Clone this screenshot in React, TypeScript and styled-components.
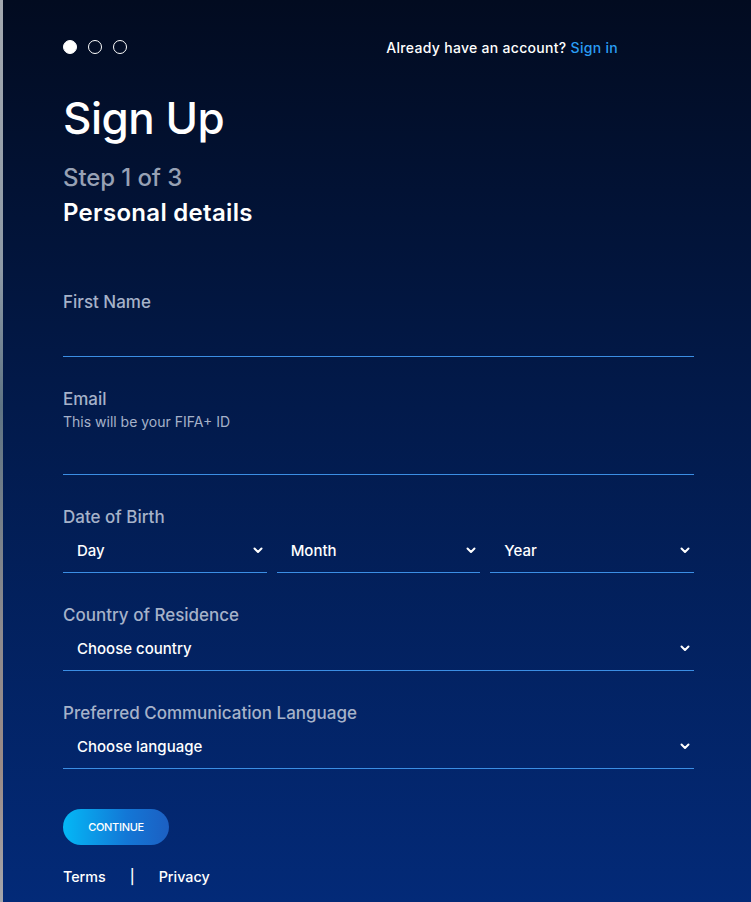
import React from "react";
import styled, { createGlobalStyle } from "styled-components";

const GlobalStyle = createGlobalStyle`
  html, body {
    margin: 0;
    padding: 0;
    background: #0a1530;
  }
  * {
    box-sizing: border-box;
  }
`;

const FONT = `"Inter", "Noto Sans", "Liberation Sans", sans-serif`;

const Page = styled.div`
  display: flex;
  min-height: 902px;
  padding-left: 3px;
  background: linear-gradient(180deg, #a4a9b0 0%, #8e9aa6 30%, #5f7484 45%, #8d8a8e 70%, #9a8a86 85%, #a4a6ad 100%);
  font-family: ${FONT};
`;

const Panel = styled.main`
  flex: 1;
  display: flex;
  flex-direction: column;
  padding: 40px 57px 16px 60px;
  background: linear-gradient(180deg, #020b20 0%, #021a4b 45%, #032a78 100%);
  color: #ffffff;
`;

const TopBar = styled.div`
  display: flex;
  align-items: center;
  justify-content: space-between;
  height: 14px;
  padding-right: 76px;
`;

const Dots = styled.div`
  display: flex;
  gap: 11px;
`;

const Dot = styled.span<{ $active?: boolean }>`
  width: 14px;
  height: 14px;
  border-radius: 50%;
  border: 1.5px solid #ffffff;
  background: ${(p) => (p.$active ? "#ffffff" : "transparent")};
`;

const SignInText = styled.p`
  margin: 0;
  font-size: 14px;
  font-weight: 500;
  letter-spacing: 0.3px;
  color: #ffffff;

  a {
    color: #2a9df4;
    text-decoration: none;
  }
`;

const Title = styled.h1`
  margin: 38px 0 0;
  font-size: 44px;
  line-height: 53px;
  font-weight: 500;
  letter-spacing: -0.5px;
`;

const StepLine = styled.div<{ $muted?: boolean; $top?: number }>`
  margin-top: ${(p) => p.$top ?? 0}px;
  font-size: 24px;
  line-height: 35px;
  font-weight: ${(p) => (p.$muted ? 500 : 600)};
  letter-spacing: ${(p) => (p.$muted ? "-0.1px" : "0.3px")};
  color: ${(p) => (p.$muted ? "#97a1b4" : "#ffffff")};
`;

const Form = styled.form`
  display: flex;
  flex-direction: column;
  gap: 30px;
  margin-top: 60px;
`;

const Field = styled.div`
  display: flex;
  flex-direction: column;
`;

const Label = styled.label`
  font-size: 17px;
  line-height: 24px;
  font-weight: 500;
  color: #a6b2c9;
`;

const Hint = styled.span`
  font-size: 14px;
  line-height: 21px;
  color: #a6b2c9;
`;

const TextInput = styled.input`
  height: 43px;
  width: 100%;
  padding: 0 14px;
  background: transparent;
  border: none;
  border-bottom: 1px solid #3b8ee4;
  color: #ffffff;
  font-family: ${FONT};
  font-size: 15px;
  outline: none;
`;

const SelectRow = styled.div`
  display: grid;
  grid-template-columns: repeat(3, 1fr);
  gap: 10px;
`;

const SelectBox = styled.div`
  display: flex;
  align-items: center;
  justify-content: space-between;
  height: 44px;
  padding: 0 4px 0 14px;
  border-bottom: 1px solid #3b8ee4;
  font-size: 15px;
  font-weight: 500;
  letter-spacing: 0;
  color: #ffffff;
`;

const Chevron = () => (
  <svg width="10" height="7" viewBox="0 0 10 7" fill="none">
    <path d="M1.5 1.5 5 5l3.5-3.5" stroke="#ffffff" strokeWidth="2" strokeLinecap="round" strokeLinejoin="round" />
  </svg>
);

const Select = ({ value }: { value: string }) => (
  <SelectBox>
    <span>{value}</span>
    <Chevron />
  </SelectBox>
);

const ContinueButton = styled.button`
  align-self: flex-start;
  margin-top: 40px;
  width: 106px;
  height: 36px;
  border: none;
  border-radius: 18px;
  background: linear-gradient(90deg, #04b8f6 0%, #1377d6 60%, #1c5fc2 100%);
  color: #ffffff;
  font-family: ${FONT};
  font-size: 11px;
  font-weight: 500;
  letter-spacing: -0.3px;
  text-transform: uppercase;
`;

const Footer = styled.nav`
  display: flex;
  align-items: center;
  gap: 24px;
  margin-top: 21px;
  font-size: 14.3px;
  font-weight: 500;
  line-height: 22px;

  a {
    color: #ffffff;
    text-decoration: none;
  }
`;

export default function App() {
  return (
    <>
      <GlobalStyle />
      <Page>
        <Panel>
          <TopBar>
            <Dots>
              <Dot $active />
              <Dot />
              <Dot />
            </Dots>
            <SignInText>
              Already have an account? <a href="#signin">Sign in</a>
            </SignInText>
          </TopBar>

          <Title>Sign Up</Title>
          <StepLine $muted $top={15}>
            Step 1 of 3
          </StepLine>
          <StepLine>Personal details</StepLine>

          <Form>
            <Field>
              <Label>First Name</Label>
              <TextInput />
            </Field>
            <Field>
              <Label>Email</Label>
              <Hint>This will be your FIFA+ ID</Hint>
              <TextInput />
            </Field>
            <Field>
              <Label>Date of Birth</Label>
              <SelectRow>
                <Select value="Day" />
                <Select value="Month" />
                <Select value="Year" />
              </SelectRow>
            </Field>
            <Field>
              <Label>Country of Residence</Label>
              <Select value="Choose country" />
            </Field>
            <Field>
              <Label>Preferred Communication Language</Label>
              <Select value="Choose language" />
            </Field>
          </Form>

          <ContinueButton type="button">Continue</ContinueButton>

          <Footer>
            <a href="#terms">Terms</a>
            <span>|</span>
            <a href="#privacy">Privacy</a>
          </Footer>
        </Panel>
      </Page>
    </>
  );
}
